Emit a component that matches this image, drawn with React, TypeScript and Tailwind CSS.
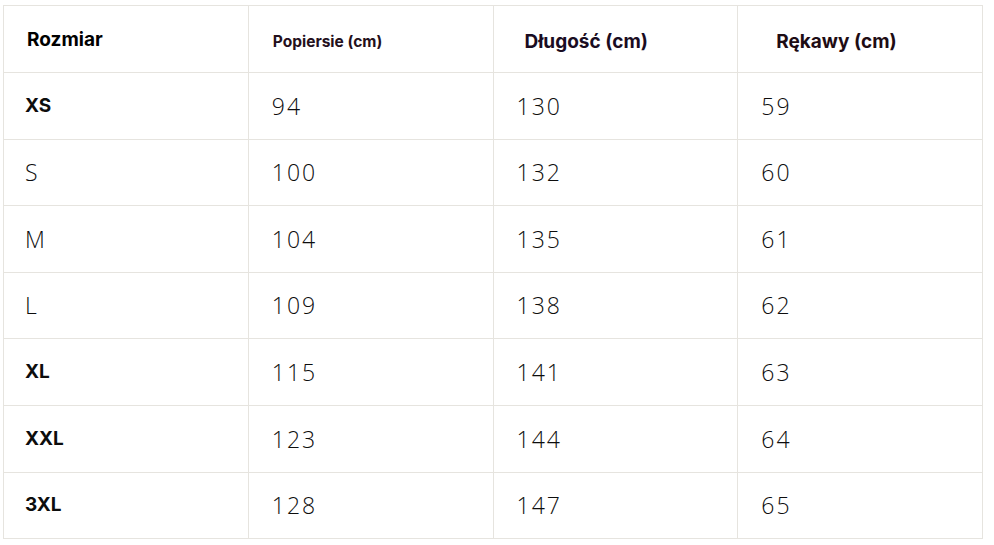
const HEAD = [
  { label: 'Rozmiar', cls: 'text-[19px] pl-[23px] text-black', off: 'top-[1px]' },
  { label: 'Popiersie (cm)', cls: 'text-[15.5px] pl-[24px] text-[#24101c]', off: 'top-[3px]' },
  { label: 'Długość (cm)', cls: 'text-[19px] pl-[31px] text-[#1a0c22]', off: 'top-[3px]' },
  { label: 'Rękawy (cm)', cls: 'text-[19px] pl-[38px] text-[#1e0c14]', off: 'top-[3px]' },
]

const ROWS: { size: string; bold: boolean; values: string[] }[] = [
  { size: 'XS', bold: true, values: ['94', '130', '59'] },
  { size: 'S', bold: false, values: ['100', '132', '60'] },
  { size: 'M', bold: false, values: ['104', '135', '61'] },
  { size: 'L', bold: false, values: ['109', '138', '62'] },
  { size: 'XL', bold: true, values: ['115', '141', '63'] },
  { size: 'XXL', bold: true, values: ['123', '144', '64'] },
  { size: '3XL', bold: true, values: ['128', '147', '65'] },
]

export default function App() {
  return (
    <div className="w-[994px] h-[545px] bg-white pt-[5px] pl-[3px] font-['Inter',sans-serif]">
      <table className="w-[980px] border-collapse table-fixed border border-[#e6e4df]">
        <thead>
          <tr className="h-[67px]">
            {HEAD.map((h) => (
              <th
                key={h.label}
                className={`border border-[#e6e4df] text-left font-bold ${h.cls}`}
              >
                <span className={`relative ${h.off}`}>{h.label}</span>
              </th>
            ))}
          </tr>
        </thead>
        <tbody>
          {ROWS.map((r) => (
            <tr key={r.size} className="h-[66.6px]">
              <td
                className={`border border-[#e6e4df] pl-[21px] text-[#0d0d0d] ${
                  r.bold
                    ? 'font-bold text-[19px]'
                    : "font-light text-[23px] font-['Open_Sans',sans-serif] tracking-[0.5px]"
                }`}
              >
                {r.size}
              </td>
              {r.values.map((v, i) => (
                <td
                  key={i}
                  className="border border-[#e6e4df] pl-[23px] text-[23px] font-light font-['Open_Sans',sans-serif] tracking-[2px] text-[#0d0d0d]"
                >
                  {v}
                </td>
              ))}
            </tr>
          ))}
        </tbody>
      </table>
    </div>
  )
}
